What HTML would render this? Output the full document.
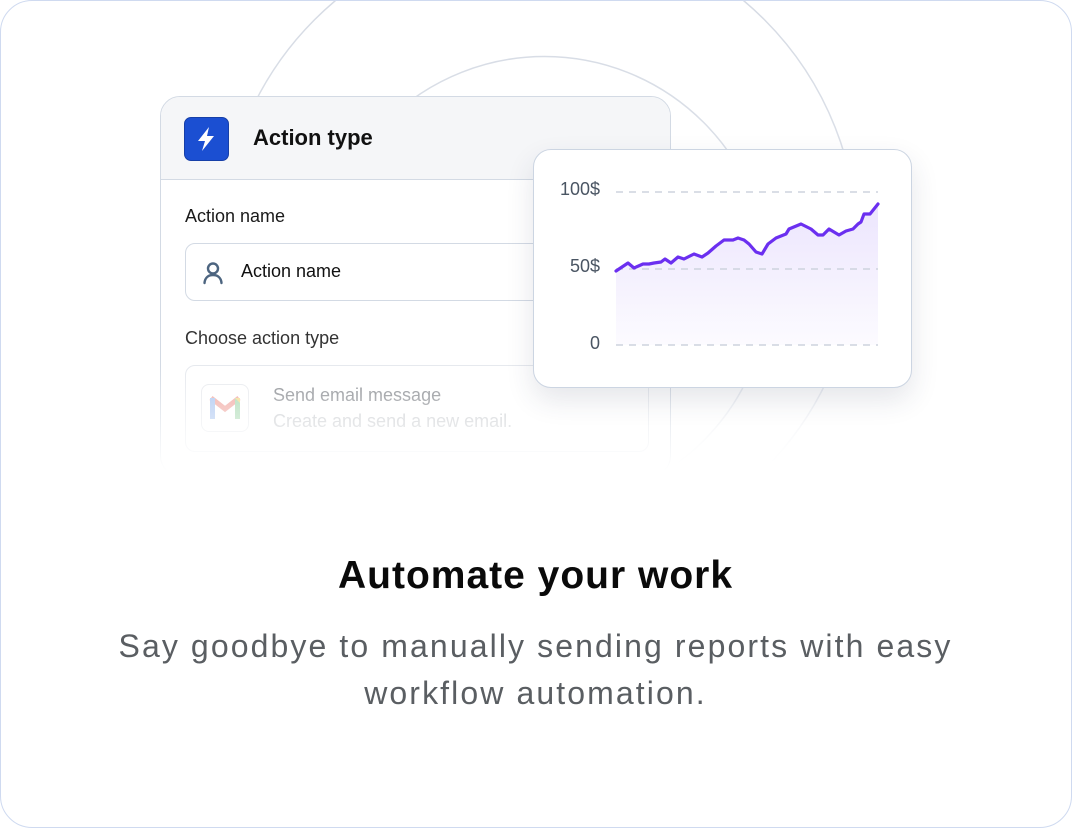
<!DOCTYPE html>
<html><head><meta charset="utf-8"><style>
*{box-sizing:border-box;margin:0;padding:0}
html,body{width:1072px;height:828px;background:#fff;overflow:hidden;font-family:"Liberation Sans",sans-serif}
.card{position:absolute;left:0;top:0;width:1072px;height:828px;border:1.5px solid #cfdaf0;border-radius:32px;background:#fff;overflow:hidden}
.abs{position:absolute}
.left{left:159px;top:95px;width:511px;height:380px;border:1.5px solid #d3dae4;border-radius:20px;background:#fff;overflow:hidden}
.hdr{height:83px;background:#f5f6f8;border-bottom:1.5px solid #d3dae4;position:relative}
.ico{position:absolute;left:23px;top:20px;width:45px;height:44px;background:#1b4fd2;border:1.5px solid #163fa8;border-radius:7px}
.title{position:absolute;left:92px;top:28px;font-size:22px;font-weight:600;color:#111}
.lbl{position:absolute;left:24px;font-size:18px;color:#1a1a1a}
.inp{position:absolute;left:24px;top:146px;width:520px;height:58px;border:1.5px solid #d3dae4;border-radius:10px}
.choice{position:absolute;left:24px;top:268px;width:464px;height:87px;border:1.5px solid #e6e9ee;border-radius:10px}
.fade{position:absolute;left:0;top:365px;width:1070px;height:150px;background:linear-gradient(rgba(255,255,255,0),#fff 70%)}
.chart{left:532px;top:148px;width:379px;height:239px;border:1.5px solid #ccd5e2;border-radius:18px;background:#fff;box-shadow:0 12px 28px rgba(40,50,80,.12)}
.yl{position:absolute;font-size:18px;color:#4a5563;text-align:right;width:70px;left:0}
h1{position:absolute;top:553px;left:0;width:1069px;text-align:center;font-size:39px;font-weight:600;color:#0a0a0a;letter-spacing:1px}
p{position:absolute;top:622px;left:0;width:1069px;text-align:center;font-size:32px;line-height:47px;color:#5a5e62;letter-spacing:2.1px}
</style></head><body>
<div class="card">
<svg class="abs" style="left:0;top:0" width="1070" height="520">
<defs><linearGradient id="cf" gradientUnits="userSpaceOnUse" x1="0" y1="0" x2="0" y2="480"><stop offset="0" stop-color="#d6dbe4"/><stop offset=".8" stop-color="#e3e7ee"/><stop offset="1" stop-color="#fff"/></linearGradient></defs>
<g transform="translate(-1.5,-1.5)" fill="none" stroke="url(#cf)" stroke-width="1.5">
<circle cx="540" cy="245" r="318"/>
<circle cx="545" cy="282" r="225"/>
</g>
</svg>
<div class="abs left">
 <div class="hdr"><div class="ico"><svg width="42" height="41" viewBox="0 0 42 41"><path d="M24 9 L13 23 H20 L17 33 L29 18 H22 Z" fill="#fff"/></svg></div>
 <div class="title">Action type</div></div>
 <div class="lbl" style="top:109px">Action name</div>
 <div class="inp"><svg class="abs" style="left:16px;top:17px" width="22" height="24" viewBox="0 0 22 24"><circle cx="11" cy="7.5" r="5" fill="none" stroke="#4d6580" stroke-width="2.4"/><path d="M2.5 22 C3 16 7 14 11 14 C15 14 19 16 19.5 22" fill="none" stroke="#4d6580" stroke-width="2.4" stroke-linecap="round"/></svg>
 <div class="abs" style="left:55px;top:17px;font-size:18px;color:#111">Action name</div></div>
 <div class="lbl" style="top:231px;color:#333">Choose action type</div>
 <div class="choice">
  <div class="abs" style="left:15px;top:18px;width:48px;height:48px;border:1.5px solid #e8eaee;border-radius:8px"><svg class="abs" style="left:7px;top:10px" width="32" height="26" viewBox="0 0 32 26"><path d="M2 3 L16 14 L30 3" fill="none" stroke="#f0a7a0" stroke-width="5"/><rect x="1" y="3" width="5" height="21" fill="#a9c4f0"/><rect x="26" y="3" width="5" height="21" fill="#a8d9b1"/><path d="M26 3 L31 3 L31 8 Z" fill="#f5d98a"/></svg></div>
  <div class="abs" style="left:87px;top:19px;font-size:18px;color:#8a8d92">Send email message</div>
  <div class="abs" style="left:87px;top:45px;font-size:18px;color:#c6c9cd">Create and send a new email.</div>
 </div>
</div>
<div class="fade"></div>
<div class="abs chart">
 <div class="yl" style="top:29px;left:-4px">100$</div>
 <div class="yl" style="top:106px;left:-4px">50$</div>
 <div class="yl" style="top:183px;left:-4px">0</div>
 <svg class="abs" style="left:-533px;top:-149px" width="1000" height="400">
  <defs><linearGradient id="ar2" x1="0" y1="0" x2="0" y2="1"><stop offset="0" stop-color="#ece5fd"/><stop offset="1" stop-color="#fcfbff"/></linearGradient></defs>
  <path d="M615,270 L627,262 L633,267 L642,263 L648,263 L653,262 L660,261 L664,258 L670,262 L677,256 L683,258 L693,253 L701,256 L707,252 L715,245 L723,239 L732,239 L737,237 L743,239 L748,243 L755,251 L761,253 L767,243 L775,237 L785,233 L788,228 L800,223 L810,228 L817,234 L822,234 L828,228 L838,234 L845,230 L852,228 L857,223 L860,221 L863,213 L869,213 L877,203 L877,344 L615,344 Z" fill="url(#ar2)"/>
  <g stroke="#cdd3de" stroke-width="1.6" stroke-dasharray="7 6"><line x1="615" y1="191" x2="877" y2="191"/><line x1="615" y1="268" x2="877" y2="268"/><line x1="615" y1="344" x2="877" y2="344"/></g>
  <path d="M615,270 L627,262 L633,267 L642,263 L648,263 L653,262 L660,261 L664,258 L670,262 L677,256 L683,258 L693,253 L701,256 L707,252 L715,245 L723,239 L732,239 L737,237 L743,239 L748,243 L755,251 L761,253 L767,243 L775,237 L785,233 L788,228 L800,223 L810,228 L817,234 L822,234 L828,228 L838,234 L845,230 L852,228 L857,223 L860,221 L863,213 L869,213 L877,203" fill="none" stroke="#6b2ff0" stroke-width="3.2" stroke-linejoin="round" stroke-linecap="round"/>
 </svg>
</div>
<h1>Automate your work</h1>
<p>Say goodbye to manually sending reports with easy<br>workflow automation.</p>
</div>
</body></html>
